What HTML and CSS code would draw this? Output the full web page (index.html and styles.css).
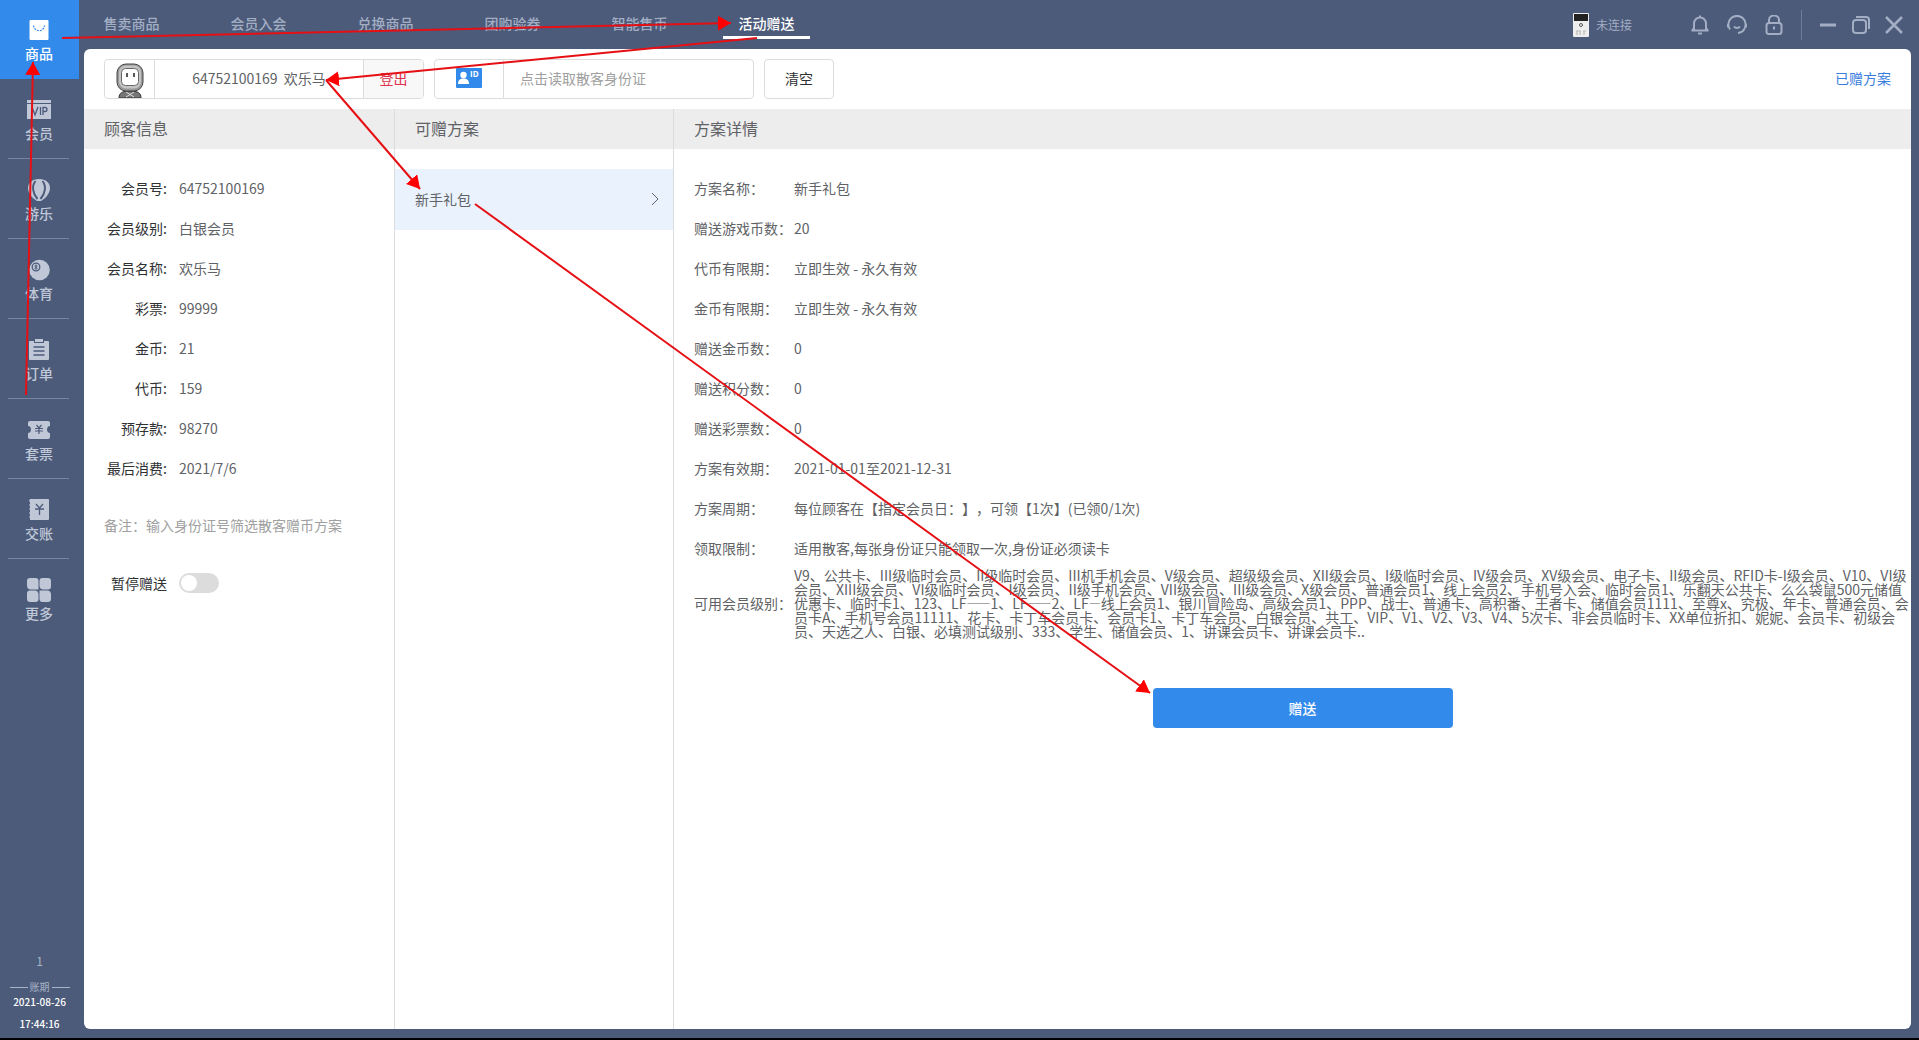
FILE: index.html
```html
<!DOCTYPE html>
<html lang="zh-CN">
<head>
<meta charset="utf-8">
<meta name="viewport" content="width=device-width, initial-scale=1">
<title>活动赠送</title>
<link rel="stylesheet" href="styles.css">
</head>
<body>
<div class="app">
  <aside class="sidebar">
    <nav class="side-nav">
      <a href="#" class="side-item active">
        <svg class="side-icon" viewBox="0 0 24 24"><rect x="2.500" y="2" width="19" height="20" rx="1" fill="#fff"/><path d="M6.500 7.500c1 7 10 7 11 0" fill="none" stroke="#328aeb" stroke-width="1.200" stroke-dasharray="2 1"/></svg>
        <span>商品</span>
      </a>
      <a href="#" class="side-item">
        <svg class="side-icon" viewBox="0 0 24 24"><path d="M0 2h24v3H0zM0 6h24v15H0z" fill="currentColor"/><g fill="none" stroke="#4c5b7a" stroke-width="1.3"><path d="M5 9l3 8 3-8M13.500 9v8M16 17V9.500h2a2 2 0 0 1 0 4h-2"/></g></svg>
        <span>会员</span>
      </a>
      <a href="#" class="side-item">
        <svg class="side-icon" viewBox="0 0 24 24"><path d="M12 1C5 1 1 5 1 10c0 5 4 10 9 13h4c5-3 9-8 9-13 0-5-4-9-11-9z" fill="currentColor"/><path d="M8.500 3c-4 5-3 12 2 18M15.500 3c4 5 3 12-2 18" fill="none" stroke="#4c5b7a" stroke-width="2"/></svg>
        <span>游乐</span>
      </a>
      <a href="#" class="side-item">
        <svg class="side-icon" viewBox="0 0 24 24"><circle cx="12.500" cy="12" r="10.300" fill="currentColor"/><circle cx="9" cy="9" r="3.800" fill="none" stroke="#4c5b7a" stroke-width="1.300"/><circle cx="9" cy="8" r="1" fill="none" stroke="#4c5b7a"/><circle cx="9" cy="10.300" r="1" fill="none" stroke="#4c5b7a"/></svg>
        <span>体育</span>
      </a>
      <a href="#" class="side-item">
        <svg class="side-icon" viewBox="0 0 24 24"><path d="M3 3h4v2h10V3h4a1 1 0 0 1 1 1v17a1 1 0 0 1-1 1H3a1 1 0 0 1-1-1V4a1 1 0 0 1 1-1zM8 1h8v3H8z" fill="currentColor"/><path d="M6.500 9h11M6.500 13h11M6.500 17h11" stroke="#4c5b7a" stroke-width="1.500"/></svg>
        <span>订单</span>
      </a>
      <a href="#" class="side-item">
        <svg class="side-icon" viewBox="0 0 24 24"><path d="M3 3h18a2 2 0 0 1 2 2v3c-4 0-4 7 0 7v4a2 2 0 0 1-2 2H3a2 2 0 0 1-2-2v-4c4 0 4-7 0-7V5a2 2 0 0 1 2-2z" fill="currentColor"/><path d="M9.500 7l2.500 3 2.500-3M8 10.500h8M8 13h8M12 10v6" fill="none" stroke="#4c5b7a" stroke-width="1.200"/></svg>
        <span>套票</span>
      </a>
      <a href="#" class="side-item">
        <svg class="side-icon" viewBox="0 0 24 24"><path d="M3 1h18a1 1 0 0 1 1 1v19a1 1 0 0 1-1 1H3v-2l-1-1 1-1v-2l-1-1 1-1v-2l-1-1 1-1V8L2 7l1-1V4L2 3z" fill="currentColor"/><path d="M9 6l3.500 4L16 6M8 11h9M12.500 10v7" fill="none" stroke="#4c5b7a" stroke-width="1.300"/></svg>
        <span>交账</span>
      </a>
      <a href="#" class="side-item">
        <svg class="side-icon" viewBox="0 0 24 24" fill="currentColor"><path d="M3 0h5.500a3 3 0 0 1 3 3v8.500H4a4 4 0 0 1-4-4V3a3 3 0 0 1 3-3zM15.500 0H21a3 3 0 0 1 3 3v5.500a3 3 0 0 1-3 3h-4.500a4 4 0 0 1-4-4V3a3 3 0 0 1 3-3zM3 12.500h4.500a4 4 0 0 1 4 4V21a3 3 0 0 1-3 3H3a3 3 0 0 1-3-3v-5.500a3 3 0 0 1 3-3zM12.500 12.500H20a4 4 0 0 1 4 4V21a3 3 0 0 1-3 3h-5.500a3 3 0 0 1-3-3z"/></svg>
        <span>更多</span>
      </a>
    </nav>
    <div class="side-foot">
      <span class="shift-no">1</span>
      <span class="shift-label">账期</span>
      <span class="clock">2021-08-26</span>
      <span class="clock">17:44:16</span>
    </div>
  </aside>

  <div class="main">
    <header class="topbar">
      <nav class="tabs">
        <a href="#" class="tab">售卖商品</a>
        <a href="#" class="tab">会员入会</a>
        <a href="#" class="tab">兑换商品</a>
        <a href="#" class="tab">团购验券</a>
        <a href="#" class="tab">智能售币</a>
        <a href="#" class="tab active">活动赠送</a>
      </nav>
      <div class="device">
        <svg width="16" height="24" viewBox="0 0 16 24"><rect width="16" height="24" rx="1" fill="#eee"/><rect x="1" y="1" width="14" height="7" fill="#222"/><circle cx="8" cy="12" r="1.500" fill="none" stroke="#555"/><path d="M4 18v4M7 18v4M11 18v4M3 18h5M10 18h3" stroke="#bbb" stroke-width="1.200"/></svg>
        <span>未连接</span>
      </div>
      <div class="tools">
        <button type="button" class="icon-btn" aria-label="通知"><svg viewBox="0 0 20 20"><path d="M4 15V8.500a6 6 0 0 1 12 0V15M1.500 15.500h17M10 .5v2M4 13l-2 2.500M16 13l2 2.500M8 18.500h4"/></svg></button>
        <button type="button" class="icon-btn" aria-label="客服"><svg viewBox="0 0 20 20"><path d="M3 14.500a8.600 8.600 0 1 1 14 0c-1 2-3 3-6 3.500M1 9v3.500M19 9v3.500M7 11.500c1.500 2 4.500 2 6 0"/></svg></button>
        <button type="button" class="icon-btn" aria-label="锁定"><svg viewBox="0 0 20 20"><rect x="2.500" y="8" width="15" height="11" rx="2.500"/><path d="M5 8V5a5 4.500 0 0 1 10 0v3M10 11.500v3"/></svg></button>
      </div>
      <div class="window-tools">
        <button type="button" class="icon-btn" aria-label="最小化"><svg viewBox="0 0 20 20"><path d="M2 10h16" stroke-width="3"/></svg></button>
        <button type="button" class="icon-btn" aria-label="还原"><svg viewBox="0 0 20 20"><rect x="2" y="5" width="13" height="13" rx="3"/><path d="M5 2h10a3 3 0 0 1 3 3v9"/></svg></button>
        <button type="button" class="icon-btn" aria-label="关闭"><svg viewBox="0 0 20 20"><path d="M2 2l16 16M18 2L2 18" stroke-width="2.500"/></svg></button>
      </div>
    </header>

    <main class="panel">
      <div class="toolbar">
        <div class="group">
          <div class="avatar">
            <svg width="32" height="36" viewBox="0 0 32 36"><path d="M5 36c0-5 3-7 11-7s11 2 11 7z" fill="#777" stroke="#333"/><path d="M12 30l8 5M20 30l-8 5" stroke="#ddd"/><rect x="3" y="2" width="26" height="27" rx="9" fill="#999" stroke="#444"/><rect x="5" y="3.500" width="22" height="23" rx="7" fill="#c4c4c4"/><rect x="7.500" y="6.500" width="17" height="17" rx="4" fill="#fff" stroke="#666"/><path d="M13 11v4M20 11v4" stroke="#222" stroke-width="1.500"/></svg>
          </div>
          <input class="member-input" type="text" aria-label="会员" value="64752100169  欢乐马">
          <button type="button" class="logout">登出</button>
        </div>
        <div class="group">
          <label class="id-icon" for="id-card">
            <svg width="26" height="20" viewBox="0 0 26 20" role="img" aria-label="身份证"><rect width="26" height="20" rx="1" fill="#328aeb"/><circle cx="7.500" cy="7" r="3.200" fill="#fff"/><path d="M2 16c0-4 2-5.500 5.500-5.500S13 12 13 16z" fill="#fff"/><text x="14" y="9" class="id-text">ID</text></svg>
          </label>
          <input class="id-input" id="id-card" type="text" placeholder="点击读取散客身份证">
        </div>
        <button type="button" class="clear">清空</button>
        <a href="#" class="given">已赠方案</a>
      </div>

      <div class="columns">
        <section class="col customer">
          <h2 class="col-title">顾客信息</h2>
          <dl class="info">
            <div class="info-row"><dt>会员号:</dt><dd>64752100169</dd></div>
            <div class="info-row"><dt>会员级别:</dt><dd>白银会员</dd></div>
            <div class="info-row"><dt>会员名称:</dt><dd>欢乐马</dd></div>
            <div class="info-row"><dt>彩票:</dt><dd>99999</dd></div>
            <div class="info-row"><dt>金币:</dt><dd>21</dd></div>
            <div class="info-row"><dt>代币:</dt><dd>159</dd></div>
            <div class="info-row"><dt>预存款:</dt><dd>98270</dd></div>
            <div class="info-row"><dt>最后消费:</dt><dd>2021/7/6</dd></div>
          </dl>
          <p class="remark">备注：输入身份证号筛选散客赠币方案</p>
          <div class="pause">
            <label for="pause-gift">暂停赠送</label>
            <input class="switch" id="pause-gift" type="checkbox">
          </div>
        </section>

        <section class="col plans">
          <h2 class="col-title">可赠方案</h2>
          <a href="#" class="plan">
            <span>新手礼包</span>
            <svg width="8" height="14" viewBox="0 0 8 14"><path d="M1 1l6 6-6 6" fill="none" stroke="#606266"/></svg>
          </a>
        </section>

        <section class="col detail">
          <h2 class="col-title">方案详情</h2>
          <dl class="info">
            <div class="detail-row"><dt>方案名称：</dt><dd>新手礼包</dd></div>
            <div class="detail-row"><dt>赠送游戏币数：</dt><dd>20</dd></div>
            <div class="detail-row"><dt>代币有限期：</dt><dd>立即生效 - 永久有效</dd></div>
            <div class="detail-row"><dt>金币有限期：</dt><dd>立即生效 - 永久有效</dd></div>
            <div class="detail-row"><dt>赠送金币数：</dt><dd>0</dd></div>
            <div class="detail-row"><dt>赠送积分数：</dt><dd>0</dd></div>
            <div class="detail-row"><dt>赠送彩票数：</dt><dd>0</dd></div>
            <div class="detail-row"><dt>方案有效期：</dt><dd>2021-01-01至2021-12-31</dd></div>
            <div class="detail-row"><dt>方案周期：</dt><dd>每位顾客在【指定会员日：】，可领【1次】(已领0/1次)</dd></div>
            <div class="detail-row"><dt>领取限制：</dt><dd>适用散客,每张身份证只能领取一次,身份证必须读卡</dd></div>
            <div class="detail-row"><dt>可用会员级别：</dt><dd>V9、公共卡、III级临时会员、II级临时会员、III机手机会员、V级会员、超级级会员、XII级会员、I级临时会员、IV级会员、XV级会员、电子卡、II级会员、RFID卡-I级会员、V10、VI级会员、XIII级会员、VI级临时会员、I级会员、II级手机会员、VII级会员、III级会员、X级会员、普通会员1、线上会员2、手机号入会、临时会员1、乐翻天公共卡、么么袋鼠500元储值优惠卡、临时卡1、123、LF<span class="dash">——</span>1、LF<span class="dash">——</span>2、LF<span class="dash">—</span>线上会员1、银川冒险岛、高级会员1、PPP、战士、普通卡、高积番、王者卡、储值会员1111、至尊x、究极、年卡、普通会员、会员卡A、手机号会员11111、花卡、卡丁车会员卡、会员卡1、卡丁车会员、白银会员、共工、VIP、V1、V2、V3、V4、5次卡、非会员临时卡、XX单位折扣、妮妮、会员卡、初级会员、天选之人、白银、必填测试级别、333、学生、储值会员、1、讲课会员卡、讲课会员卡..</dd></div>
          </dl>
          <div class="submit-row"><button type="button" class="submit">赠送</button></div>
        </section>
      </div>
    </main>
  </div>

  <svg class="guide" aria-hidden="true">
    <defs><marker id="head" viewBox="0 0 13 15" refX="13" refY="7.500" markerWidth="13" markerHeight="15" markerUnits="userSpaceOnUse" orient="auto"><path d="M0 0l13 7.500L0 15z"/></marker></defs>
    <path class="arrow" d="M26 395L33 62"/>
    <path class="arrow" d="M62 38L731 23"/>
    <path class="arrow" d="M757 38L326 80"/>
    <path class="arrow" d="M326 80L420 189"/>
    <path class="arrow" d="M475 204L1150 693"/>
  </svg>
</div>
</body>
</html>
```
FILE: styles.css
```css
* { box-sizing: border-box; }

body {
  margin: 0;
  font: 14px/20px "Noto Sans CJK SC", "Noto Sans", sans-serif;
  text-spacing-trim: space-all;
  color: #606266;
  background: #4c5b7a;
}

a { color: inherit; text-decoration: none; }

button, input { font: inherit; margin: 0; }

h2, p, dl, dd { margin: 0; }

.app {
  position: relative;
  display: flex;
  min-height: 100vh;
  background: #4c5b7a;
  border-bottom: 2px solid #000;
}

/* Sidebar */
.sidebar {
  display: flex;
  flex-direction: column;
  flex: none;
  width: 84px;
  color: #c0c8d8;
}

.side-nav { width: 79px; }

.side-item {
  position: relative;
  display: flex;
  flex-direction: column;
  align-items: center;
  gap: 1px;
  height: 80px;
  padding: 18px 1px 0 0;
  font-weight: 500;
}

.side-item:not(.active):not(:last-child)::after {
  content: "";
  position: absolute;
  left: 8px;
  right: 10px;
  bottom: 1px;
  border-bottom: 1px solid #7785a0;
}

.side-item.active {
  height: 79px;
  margin-bottom: 1px;
  background: #328aeb;
  color: #fff;
}

.side-icon { width: 24px; height: 24px; }

.side-foot {
  display: flex;
  flex-direction: column;
  align-items: center;
  width: 79px;
  margin-top: auto;
  padding-bottom: 3px;
  font-size: 10px;
  color: #fff;
}

.shift-no {
  margin-bottom: 12px;
  font-size: 12px;
  color: #a9b3c6;
}

.shift-label {
  display: flex;
  align-items: center;
  gap: 2px;
  width: 60px;
  line-height: 8px;
  color: #a9b3c6;
}

.shift-label::before,
.shift-label::after {
  content: "";
  flex: 1;
  border-top: 1px solid #a9b3c6;
}

.clock { line-height: 22px; font-weight: 500; }

/* Top bar */
.main {
  display: flex;
  flex-direction: column;
  flex: 1;
  min-width: 0;
  padding: 0 8px 9px 0;
}

.topbar {
  display: flex;
  align-items: center;
  height: 49px;
  color: #a3aec4;
}

.tabs {
  display: flex;
  gap: 40px;
  margin: 0 auto 0 4px;
}

.tab {
  width: 87px;
  padding: 2px 0;
  line-height: 22px;
  text-align: center;
  border-bottom: 3px solid transparent;
  font-weight: 500;
}

.tab.active { color: #fff; border-color: #fff; }

.device {
  display: flex;
  align-items: center;
  gap: 7px;
  font-size: 12px;
}

.tools {
  display: flex;
  gap: 17px;
  margin-left: 58px;
  padding-right: 17px;
}

.window-tools {
  display: flex;
  align-items: center;
  gap: 13px;
  height: 30px;
  padding: 0 7px 0 16px;
  border-left: 1px solid #6f7d99;
}

.icon-btn {
  display: flex;
  padding: 0;
  border: 0;
  background: none;
  color: #a3aec4;
}

.icon-btn svg {
  width: 20px;
  height: 20px;
  fill: none;
  stroke: currentColor;
  stroke-width: 2;
}

/* Panel */
.panel {
  display: flex;
  flex-direction: column;
  flex: 1;
  overflow: hidden;
  border-radius: 6px;
  background: #fff;
}

.toolbar {
  display: flex;
  align-items: center;
  gap: 10px;
  height: 60px;
  padding: 0 20px;
}

.group {
  display: flex;
  width: 320px;
  height: 40px;
  overflow: hidden;
  border: 1px solid #dcdcdc;
  border-radius: 4px;
}

.avatar {
  display: flex;
  justify-content: center;
  align-items: flex-end;
  width: 50px;
  border-right: 1px solid #dcdcdc;
}

.member-input,
.id-input {
  flex: 1;
  min-width: 0;
  padding: 0 16px 2px;
  border: 0;
  outline: 0;
  background: none;
  color: #606266;
}

.member-input { text-align: center; white-space: pre; }

.id-input::placeholder { color: #a0a0a0; opacity: 1; }

.logout {
  width: 60px;
  padding: 0 0 2px;
  border: 0;
  border-left: 1px solid #dcdcdc;
  background: #f8f8f8;
  color: #e0304a;
}

.id-icon {
  display: flex;
  align-items: center;
  justify-content: center;
  width: 69px;
  padding-bottom: 2px;
  border-right: 1px solid #dcdcdc;
}

.id-text { font: bold 8px "Open Sans", sans-serif; fill: #fff; }

.clear {
  width: 70px;
  height: 40px;
  padding: 0 0 2px;
  border: 1px solid #dcdcdc;
  border-radius: 4px;
  background: #fff;
  color: #303133;
}

.given {
  margin-left: auto;
  padding-bottom: 2px;
  color: #3a7ddc;
}

.columns { display: flex; flex: 1; }

.col + .col { border-left: 1px solid #dcdcdc; }

.customer { flex: none; width: 310px; }

.plans { flex: none; width: 279px; }

.detail { flex: 1; min-width: 0; }

.col-title {
  height: 40px;
  padding: 0 20px;
  font-size: 16px;
  font-weight: 400;
  line-height: 38px;
  background: #ededed;
}

.info { margin-top: 19px; }

.info-row {
  display: flex;
  gap: 12px;
  padding-left: 20px;
  line-height: 40px;
}

.info-row dt { width: 63px; text-align: right; color: #303133; }

.remark {
  margin-top: 27px;
  padding-left: 20px;
  color: #a0a0a0;
}

.pause {
  display: flex;
  align-items: center;
  gap: 12px;
  margin-top: 38px;
  padding-left: 27px;
  color: #303133;
}

.switch {
  appearance: none;
  display: flex;
  width: 40px;
  height: 20px;
  padding: 2px;
  border-radius: 10px;
  background: #dcdcdc;
}

.switch::before {
  content: "";
  width: 16px;
  height: 16px;
  border-radius: 50%;
  background: #fff;
}

.switch:checked { justify-content: flex-end; background: #328aeb; }

.plan {
  display: flex;
  align-items: center;
  justify-content: space-between;
  height: 61px;
  margin-top: 20px;
  padding: 0 14px 2px 20px;
  background: #eaf3fd;
}

.detail-row {
  display: flex;
  align-items: center;
  min-height: 40px;
  padding: 0 2px 0 20px;
  line-height: 14px;
}

.detail-row dt { flex: none; width: 100px; white-space: nowrap; }

.dash { font-size: 12px; line-height: 12px; }

.submit-row {
  display: flex;
  justify-content: center;
  margin-top: 50px;
  padding-left: 20px;
}

.submit {
  width: 300px;
  height: 40px;
  padding: 0;
  border: 0;
  border-radius: 4px;
  background: #328aeb;
  color: #fff;
  font-weight: 500;
}

/* Walkthrough arrows laid over the screen */
.guide {
  position: absolute;
  top: 0;
  left: 0;
  width: 100%;
  height: 100%;
  pointer-events: none;
  fill: #f00;
}

.arrow {
  stroke: #e60f14;
  stroke-width: 2;
  marker-end: url(#head);
}
```
